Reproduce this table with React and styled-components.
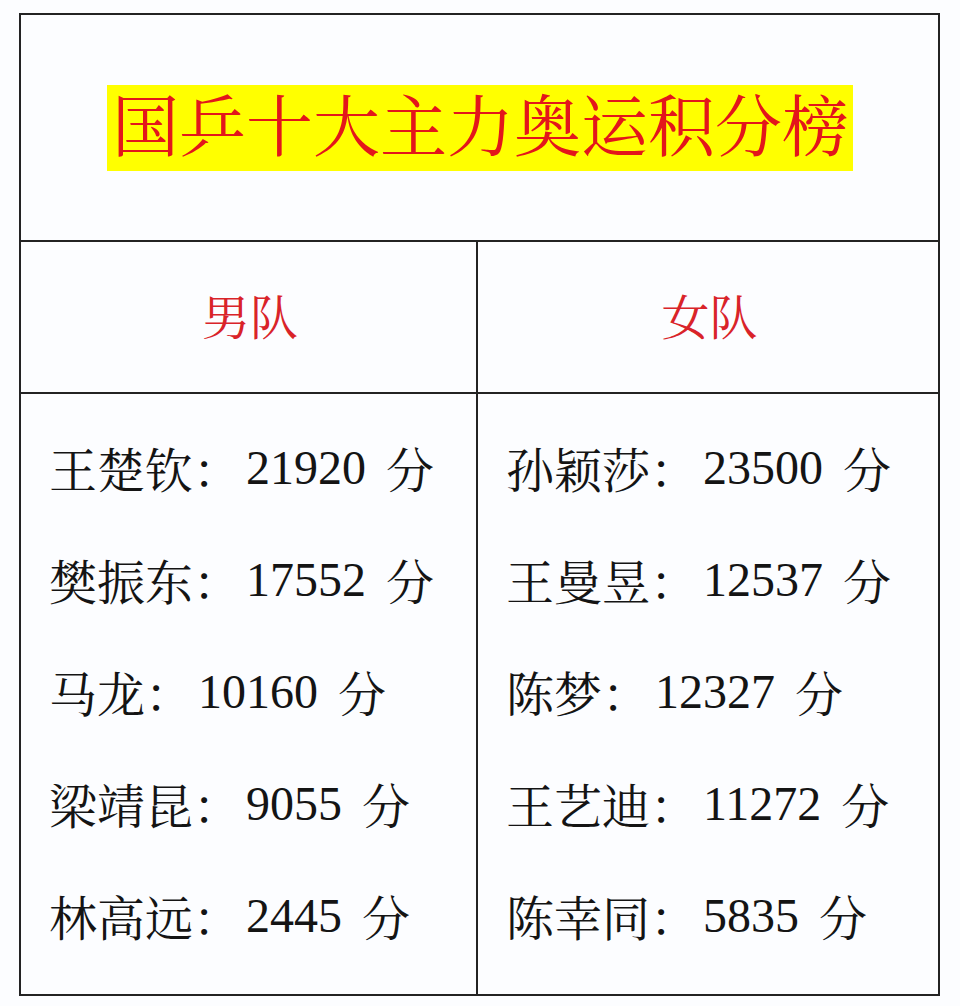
import styled, { createGlobalStyle } from "styled-components";

const GlobalStyle = createGlobalStyle`
    html, body {
        margin: 0;
        padding: 0;
        background: #fcfdff;
    }
    body {
        font-family: "Liberation Serif", "Noto Serif CJK SC", "Noto Sans CJK SC", serif;
    }
`;

const Page = styled.div`
    width: 960px;
    height: 1006px;
    padding: 13px 0 0 19px;
    box-sizing: border-box;
`;

const Board = styled.div`
    width: 921px;
    height: 983px;
    box-sizing: border-box;
    border: 2px solid #232323;
    display: flex;
    flex-direction: column;
`;

const TitleRow = styled.div`
    height: 227px;
    box-sizing: border-box;
    border-bottom: 2px solid #232323;
    display: flex;
    justify-content: center;
    align-items: center;
    padding-left: 1px;
`;

const Title = styled.h1`
    margin: 0;
    background: #ffff00;
    color: #e3161b;
    font-size: 67px;
    font-weight: normal;
    line-height: 86px;
    height: 86px;
    padding: 0 4px 0 5px;
    white-space: nowrap;
`;

const Grid = styled.div`
    display: grid;
    grid-template-columns: 457px 1fr;
    grid-template-rows: 152px 1fr;
    flex: 1;
`;

const HeadCell = styled.div`
    box-sizing: border-box;
    border-bottom: 2px solid #232323;
    border-right: ${(p) => (p.$first ? "2px solid #232323" : "none")};
    display: flex;
    justify-content: center;
    align-items: center;
    color: #d92329;
    font-size: 48px;
    padding: 0 0 6px 3px;
`;

const BodyCell = styled.div`
    border-right: ${(p) => (p.$first ? "2px solid #232323" : "none")};
    padding: 17px 0 0 28px;
    display: flex;
    flex-direction: column;
`;

const Line = styled.div`
    height: 112px;
    display: flex;
    align-items: center;
    font-size: 48px;
    color: #141414;
    white-space: pre;
`;

const Score = styled.span`
    margin: 0 8px 0 5px;
`;

const men = [
    ["王楚钦", "21920"],
    ["樊振东", "17552"],
    ["马龙", "10160"],
    ["梁靖昆", "9055"],
    ["林高远", "2445"],
];

const women = [
    ["孙颖莎", "23500"],
    ["王曼昱", "12537"],
    ["陈梦", "12327"],
    ["王艺迪", "11272"],
    ["陈幸同", "5835"],
];

const App = () => {
    return (
        <Page lang="zh-CN">
            <GlobalStyle />
            <Board>
                <TitleRow>
                    <Title>国乒十大主力奥运积分榜</Title>
                </TitleRow>
                <Grid>
                    <HeadCell $first>男队</HeadCell>
                    <HeadCell>女队</HeadCell>
                    <BodyCell $first>
                        {men.map(([name, score]) => (
                            <Line key={name}>
                                {name}：<Score>{score}</Score> 分
                            </Line>
                        ))}
                    </BodyCell>
                    <BodyCell>
                        {women.map(([name, score]) => (
                            <Line key={name}>
                                {name}：<Score>{score}</Score> 分
                            </Line>
                        ))}
                    </BodyCell>
                </Grid>
            </Board>
        </Page>
    );
};

export default App;
